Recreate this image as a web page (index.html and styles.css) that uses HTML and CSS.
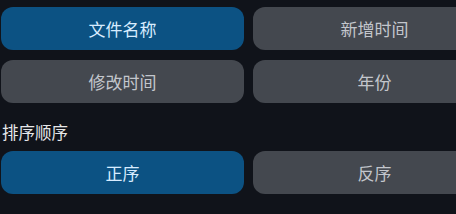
FILE: index.html
```html
<!DOCTYPE html>
<html lang="zh-CN">
<head>
    <meta charset="UTF-8">
    <meta name="viewport" content="width=device-width, initial-scale=1.0">
    <title>排序设置</title>
    <link rel="stylesheet" href="styles.css">
</head>
<body>
    <div class="panel">
        <div class="options">
            <button class="opt active">文件名称</button>
            <button class="opt">新增时间</button>
            <button class="opt">修改时间</button>
            <button class="opt">年份</button>
        </div>
        <div class="label">排序顺序</div>
        <div class="options">
            <button class="opt active">正序</button>
            <button class="opt">反序</button>
        </div>
    </div>
</body>
</html>
```

FILE: styles.css
```css
html, body {
    margin: 0;
    padding: 0;
    background-color: #10131a;
    overflow: hidden;
}
body {
    font-family: "Noto Sans CJK SC", "Noto Sans", sans-serif;
    width: 456px;
    height: 214px;
}
.panel {
    padding: 7px 0 0 1px;
    width: 520px;
}
.options {
    display: grid;
    grid-template-columns: 243px 243px;
    column-gap: 9px;
    row-gap: 10px;
}
.opt {
    height: 43px;
    border: none;
    border-radius: 12px;
    background-color: #44484f;
    color: #c3c6cc;
    font-family: inherit;
    font-size: 17px;
    padding: 0;
    cursor: pointer;
}
.opt.active {
    background-color: #0c5283;
    color: #d8ecff;
}
.label {
    color: #e6e7e9;
    font-size: 16.5px;
    line-height: 24px;
    margin: 17px 0 7px 1px;
}
```
